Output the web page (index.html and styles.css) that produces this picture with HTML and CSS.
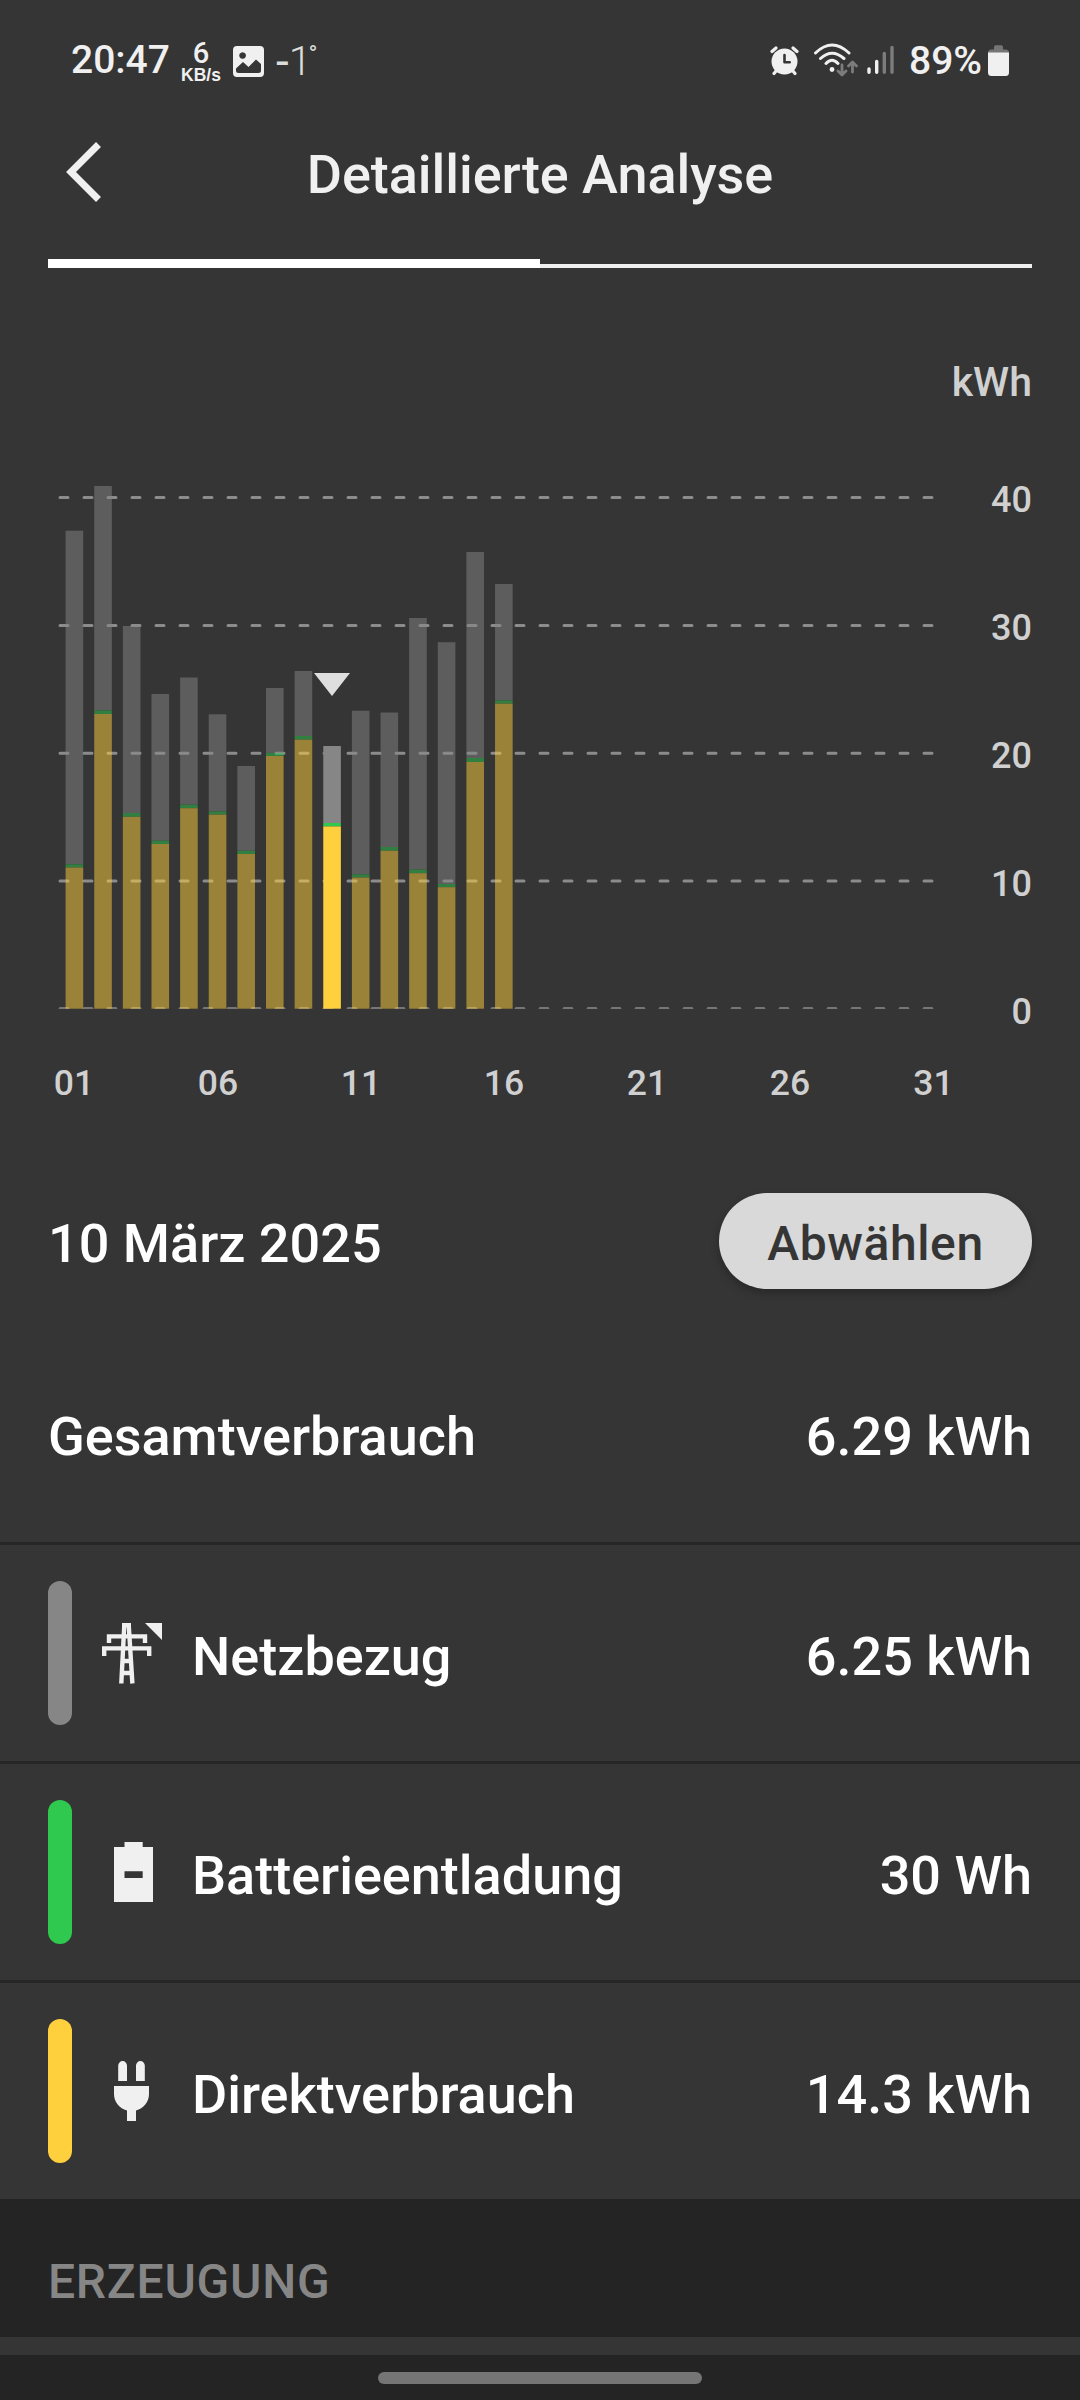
FILE: index.html
```html
<!DOCTYPE html>
<html lang="de">
<head>
<meta charset="utf-8">
<title>Detaillierte Analyse</title>
<link rel="stylesheet" href="styles.css">
</head>
<body>
<div class="screen">
  <div class="status">
    <span class="clock">20:47</span>
    <span class="speed"><b class="speed-value">6</b><b class="speed-unit">KB/s</b></span>
    <svg class="ic-image" width="31" height="31" viewBox="0 0 31 31"><path fill="#f0f0f0" fill-rule="evenodd" d="M4 0h23a4 4 0 0 1 4 4v23a4 4 0 0 1-4 4H4a4 4 0 0 1-4-4V4a4 4 0 0 1 4-4zM9.600 6.200a3.300 3.300 0 1 0 .01 0zM3 22.500v2a2.500 2.500 0 0 0 2.500 2.500h20a2.500 2.500 0 0 0 2.500-2.500v-6.500l-5-4.500-7.500 7.500-5.500-5z"/></svg>
    <span class="temp"><span class="minus">-</span>1<span class="deg">°</span></span>
    <span class="spacer"></span>
    <svg class="ic-alarm" width="30" height="30" viewBox="0 0 30 30" fill="none" stroke="#f0f0f0" stroke-linecap="round"><circle cx="14.500" cy="15.500" r="13" fill="#f0f0f0" stroke="none"/><path stroke-width="3.200" d="M2 5.500 6 2M27 5.500 23 2M6.500 24.500 4 27.500M22.500 24.500 25 27.500"/><path stroke="#353535" stroke-width="2.600" stroke-linejoin="round" d="M14.500 9v7.300h5.200"/></svg>
    <svg class="ic-wifi" width="45" height="34" viewBox="0 0 45 34" fill="none" stroke-linecap="round"><path stroke="#f0f0f0" stroke-width="3" d="M2.500 10Q19 -6 36 10M7.500 15.500Q19 5 31 15.500M13 20.500Q19 14 25 20.500"/><circle cx="19" cy="26.500" r="2.400" fill="#f0f0f0"/><path stroke="#7c7c7c" stroke-width="2.800" stroke-linejoin="round" d="M29 22v9.500M25 28l4 4 4-4M39.500 29v-9.500M35.500 23l4-4 4 4"/></svg>
    <svg class="ic-signal" width="27" height="30" viewBox="0 0 27 30" stroke-width="3.400" stroke-linecap="round"><path stroke="#f0f0f0" d="M2 24v3.300M9.700 16.500v10.800"/><path stroke="#7c7c7c" d="M17.300 8.500v18.800M25 2.500v24.800"/></svg>
    <span class="percent">89%</span>
    <svg class="ic-batt" width="21" height="31" viewBox="0 0 21 31"><path fill="#757575" d="M0 8a3.500 3.500 0 0 1 3.500-3.500H6V2a1.800 1.800 0 0 1 1.800-1.800h5.400A1.800 1.800 0 0 1 15 2v2.500h2.500A3.500 3.500 0 0 1 21 8z"/><path fill="#f0f0f0" d="M0 7.500h21V27.500a3.500 3.500 0 0 1-3.500 3.500h-14A3.500 3.500 0 0 1 0 27.500z"/></svg>
  </div>

  <header class="header">
    <svg class="back" width="36" height="60" viewBox="0 0 36 60"><path fill="none" stroke="#f0f0f0" stroke-width="7" d="M32.500 2.500 5 30l27.500 27.500"/></svg>
    <h1 class="title">Detaillierte Analyse</h1>
  </header>

  <div class="tabs"><i class="tab active"></i><i class="tab"></i></div>

  <svg class="chart" width="1080" height="862" viewBox="0 268 1080 862">
    <defs><clipPath id="plot"><rect x="50" y="400" width="900" height="608.700"/></clipPath></defs>
    <g class="grid" clip-path="url(#plot)">
      <path d="M60 497.500H932.500M60 625.400H932.500M60 753.200H932.500M60 881H932.500M60 1008.800H932.500"/>
    </g>
    <g id="bars"></g>
    <path class="marker" d="M314 673h36l-18 23z"/>
    <g class="label end">
      <text class="unit" x="1032" y="396">kWh</text>
      <text x="1032" y="511.500">40</text>
      <text x="1032" y="639.500">30</text>
      <text x="1032" y="767.500">20</text>
      <text x="1032" y="895.500">10</text>
      <text x="1032" y="1023.500">0</text>
    </g>
    <g class="label mid">
      <text x="74" y="1095">01</text>
      <text x="218" y="1095">06</text>
      <text x="361" y="1095">11</text>
      <text x="504" y="1095">16</text>
      <text x="647" y="1095">21</text>
      <text x="790" y="1095">26</text>
      <text x="933.500" y="1095">31</text>
    </g>
  </svg>

  <div class="selection">
    <span class="value">10 März 2025</span>
    <button class="deselect">Abwählen</button>
  </div>

  <div class="total"><span>Gesamtverbrauch</span><span>6.29 kWh</span></div>

  <div class="row">
    <i class="pill grid-color"></i>
    <svg class="icon" width="60" height="61" viewBox="0 0 60 61"><g fill="none" stroke="#f0f0f0" stroke-width="4.400"><path d="M22.400 0 19.300 60.500M26.600 0 30.400 60.500M20 2.200h9M7 20v-6.600h36V20M2.200 33v-7.600h45V33M21 38h8M20 50h9"/></g><path fill="#f0f0f0" d="M43 0h17v17z"/></svg>
    <span class="name">Netzbezug</span><span class="amount">6.25 kWh</span>
  </div>
  <div class="row">
    <i class="pill battery-color"></i>
    <svg class="icon" width="60" height="61" viewBox="0 0 60 61"><path fill="#f0f0f0" fill-rule="evenodd" d="M22.500 0h18.200v5H51v55H12V5h10.500zM22.500 29.200v6.800h18.200v-6.800z"/></svg>
    <span class="name">Batterieentladung</span><span class="amount">30 Wh</span>
  </div>
  <div class="row">
    <i class="pill direct-color"></i>
    <svg class="icon" width="60" height="61" viewBox="0 0 60 61"><path fill="#f0f0f0" d="M16.200 20V4.500a4.400 4.400 0 0 1 8.800 0V20zM34 20V4.500a4.400 4.400 0 0 1 8.800 0V20zM12 25h35v8c0 8-5.500 14.500-13 16.500V60h-9V49.500C17.500 47.500 12 41 12 33z"/></svg>
    <span class="name">Direktverbrauch</span><span class="amount">14.3 kWh</span>
  </div>

  <div class="section">ERZEUGUNG</div>
  <div class="gap"></div>
  <div class="nav"><i class="home"></i></div>
</div>
<script src="chart.js"></script>
</body>
</html>
```
FILE: styles.css
```css
* { box-sizing: border-box; }
body { margin: 0; background: #353535; }
.screen {
  width: 1080px; height: 2400px; overflow: hidden;
  display: flex; flex-direction: column;
  background: #353535; color: #fff;
  font: 500 54px/64px Roboto, sans-serif;
}
.screen > * { flex: none; }

.status { display: flex; height: 110px; padding: 0 71px 0 70px; color: #f0f0f0; align-items: flex-start; }
.clock { font-size: 39px; line-height: 46px; margin: 37px 0 0 1px; width: 110px; }
.speed { display: flex; flex-direction: column; align-items: center; width: 40px; margin-top: 40px; font-family: "Liberation Sans", sans-serif; }
.speed-value { font: 500 29px/27px Roboto, sans-serif; }
.speed-unit { font-size: 17.5px; line-height: 16px; }
.ic-image { margin: 46px 0 0 12px; }
.temp { display: flex; margin: 38px 0 0 12px; font-size: 41px; line-height: 46px; font-weight: 300; color: #dcdcdc; }
.minus { font-size: 46px; font-weight: 400; }
.deg { font-size: 24px; line-height: 32px; font-weight: 400; margin-left: -3px; }
.spacer { flex: 1; }
.ic-alarm { margin: 46px 0 0; }
.ic-wifi { margin: 43px 0 0 13px; }
.ic-signal { margin: 45px 0 0 9px; }
.percent { font-size: 39px; line-height: 46px; margin: 38px 0 0 15px; width: 79px; white-space: nowrap; }
.ic-batt { margin: 45px 0 0; }

.header { display: grid; grid-template-columns: 200px 1fr 200px; align-items: center; height: 129px; }
.back { margin: -5px 0 0 66px; }
.title { margin: 0; font-size: 54px; font-weight: 500; letter-spacing: -0.05px; text-align: center; color: #f0f0f0; white-space: nowrap; }

.tabs { display: flex; align-items: flex-end; height: 9px; margin: 20px 48px 0; }
.tab { flex: 1; height: 4.500px; background: #efefef; }
.tab.active { height: 9px; background: #fff; }

.chart { display: block; }
.grid path { fill: none; stroke: #8c8c8c; stroke-width: 3; stroke-linecap: round; stroke-dasharray: 8 16; }
.bar { opacity: .5; }
.bar.selected { opacity: 1; }
.bar .from-grid { fill: #868686; }
.bar .from-battery { fill: #2ec94e; }
.bar .direct { fill: #ffd03e; }
.marker { fill: #dedede; }
.label { font-size: 36px; fill: #d0d0d0; }
.label .unit { font-size: 41px; }
.end { text-anchor: end; }
.mid { text-anchor: middle; font-size: 35.5px; }

.selection { display: flex; justify-content: space-between; align-items: center; height: 96px; margin: 63px 48px 0; }
.selection .value { padding-top: 5px; }
.deselect {
  width: 313px; height: 96px; padding: 5px 0 0; border: 0; border-radius: 48px;
  background: #d9d9d9; color: #353535; font: 500 48px/56px Roboto, sans-serif; letter-spacing: 0.6px;
  box-shadow: 0 4px 8px rgba(0, 0, 0, .25);
}
.total { display: flex; justify-content: space-between; align-items: center; height: 210px; margin-top: 43px; padding: 0 48px; }

.row { display: flex; align-items: center; height: 219px; padding: 0 48px; border-top: 3px solid #262626; }
.pill { width: 24px; height: 144px; border-radius: 12px; }
.grid-color { background: #868686; }
.battery-color { background: #2ec94e; }
.direct-color { background: #ffd03e; }
.icon { margin: 1px 30px 0; }
.name { flex: 1; padding-top: 7px; }
.amount { padding-top: 7px; }

.section { height: 138px; padding: 55px 48px 0; background: #242424; color: #868686; font-size: 48px; line-height: 56px; letter-spacing: 0.75px; }
.gap { height: 18px; }
.nav { display: flex; justify-content: center; height: 45px; padding-top: 17px; background: #242424; }
.home { width: 324px; height: 12px; border-radius: 6px; background: #757575; }
```
FILE: chart.js
```js
// Each day: top of the grid, battery and direct segments.
const days = [
  [530.7, 864.3, 867.5], [486, 710.4, 714], [626, 813, 816.8], [694, 840.7, 844],
  [677.5, 804.6, 808.2], [714.3, 811.4, 814.6], [766, 850.7, 854], [688, 752.9, 756],
  [671, 736, 739.6], [746, 823, 826.4], [710.7, 874.3, 877.5], [712.5, 847, 850.7],
  [618, 869.6, 873.2], [642.2, 884, 887.2], [552, 758, 762], [584, 700.4, 703.6]
];
const baseline = 1008.7;
const ns = "http://www.w3.org/2000/svg";
const root = document.getElementById("bars");

days.forEach((day, i) => {
  const group = document.createElementNS(ns, "g");
  group.setAttribute("class", i === 9 ? "bar selected" : "bar");
  const edges = [...day, baseline];
  ["from-grid", "from-battery", "direct"].forEach((name, k) => {
    const rect = document.createElementNS(ns, "rect");
    rect.setAttribute("class", name);
    rect.setAttribute("x", 65.6 + i * 28.63);
    rect.setAttribute("width", 17.6);
    rect.setAttribute("y", edges[k]);
    rect.setAttribute("height", edges[k + 1] - edges[k]);
    group.appendChild(rect);
  });
  root.appendChild(group);
});
```
